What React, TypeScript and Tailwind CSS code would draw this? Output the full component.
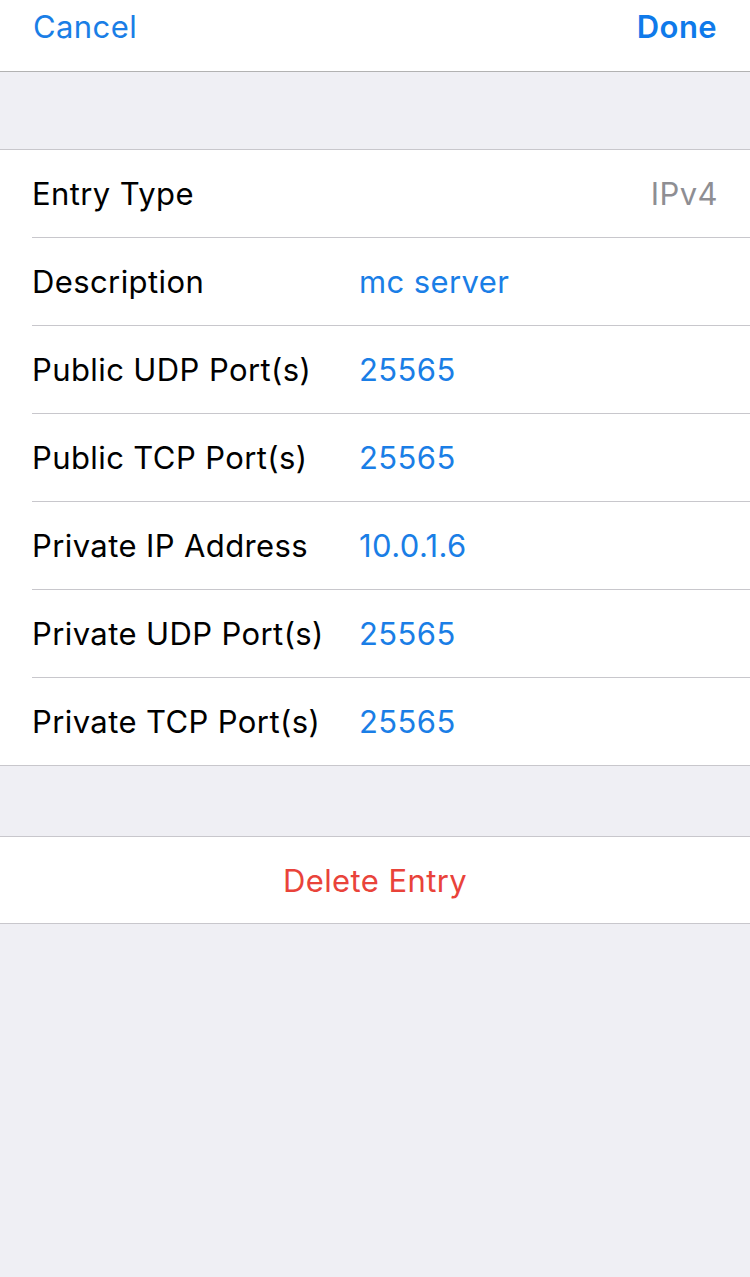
import React from "react"

type Row = {
  label: string
  value: string
  muted?: boolean
}

const rows: Row[] = [
  { label: "Entry Type", value: "IPv4", muted: true },
  { label: "Description", value: "mc server" },
  { label: "Public UDP Port(s)", value: "25565" },
  { label: "Public TCP Port(s)", value: "25565" },
  { label: "Private IP Address", value: "10.0.1.6" },
  { label: "Private UDP Port(s)", value: "25565" },
  { label: "Private TCP Port(s)", value: "25565" },
]

function EntryRow({ row, last }: { row: Row; last: boolean }) {
  return (
    <div className="pl-8">
      <div
        className={`flex items-center pr-8 ${last ? "h-[87px]" : "h-[88px] border-b border-[#c8c7cc]"}`}
      >
        <span className="w-[327px] shrink-0 text-black">{row.label}</span>
        {row.muted ? (
          <span className="ml-auto text-[#8e8e93]">{row.value}</span>
        ) : (
          <span className="text-[#1a7ee6]">{row.value}</span>
        )}
      </div>
    </div>
  )
}

export default function App() {
  return (
    <div
      className="min-h-[1277px] w-[750px] bg-[#efeff4] text-[31px] tracking-[0.4px] leading-none"
      style={{ fontFamily: "Inter, 'Liberation Sans', sans-serif" }}
    >
      <div className="h-[72px] bg-white border-b border-[#b2b2b2] flex items-start justify-between px-[33px] pt-[11px]">
        <button className="text-[#1a7ee6]">Cancel</button>
        <button className="text-[#0f7aea] font-semibold">Done</button>
      </div>

      <div className="h-[77px]" />

      <div className="bg-white border-y border-[#c8c7cc]">
        {rows.map((row, i) => (
          <EntryRow key={row.label} row={row} last={i === rows.length - 1} />
        ))}
      </div>

      <div className="h-[70px]" />

      <div className="bg-white border-y border-[#c8c7cc] h-[88px] flex items-center justify-center">
        <button className="text-[#e9433a]">Delete Entry</button>
      </div>
    </div>
  )
}
